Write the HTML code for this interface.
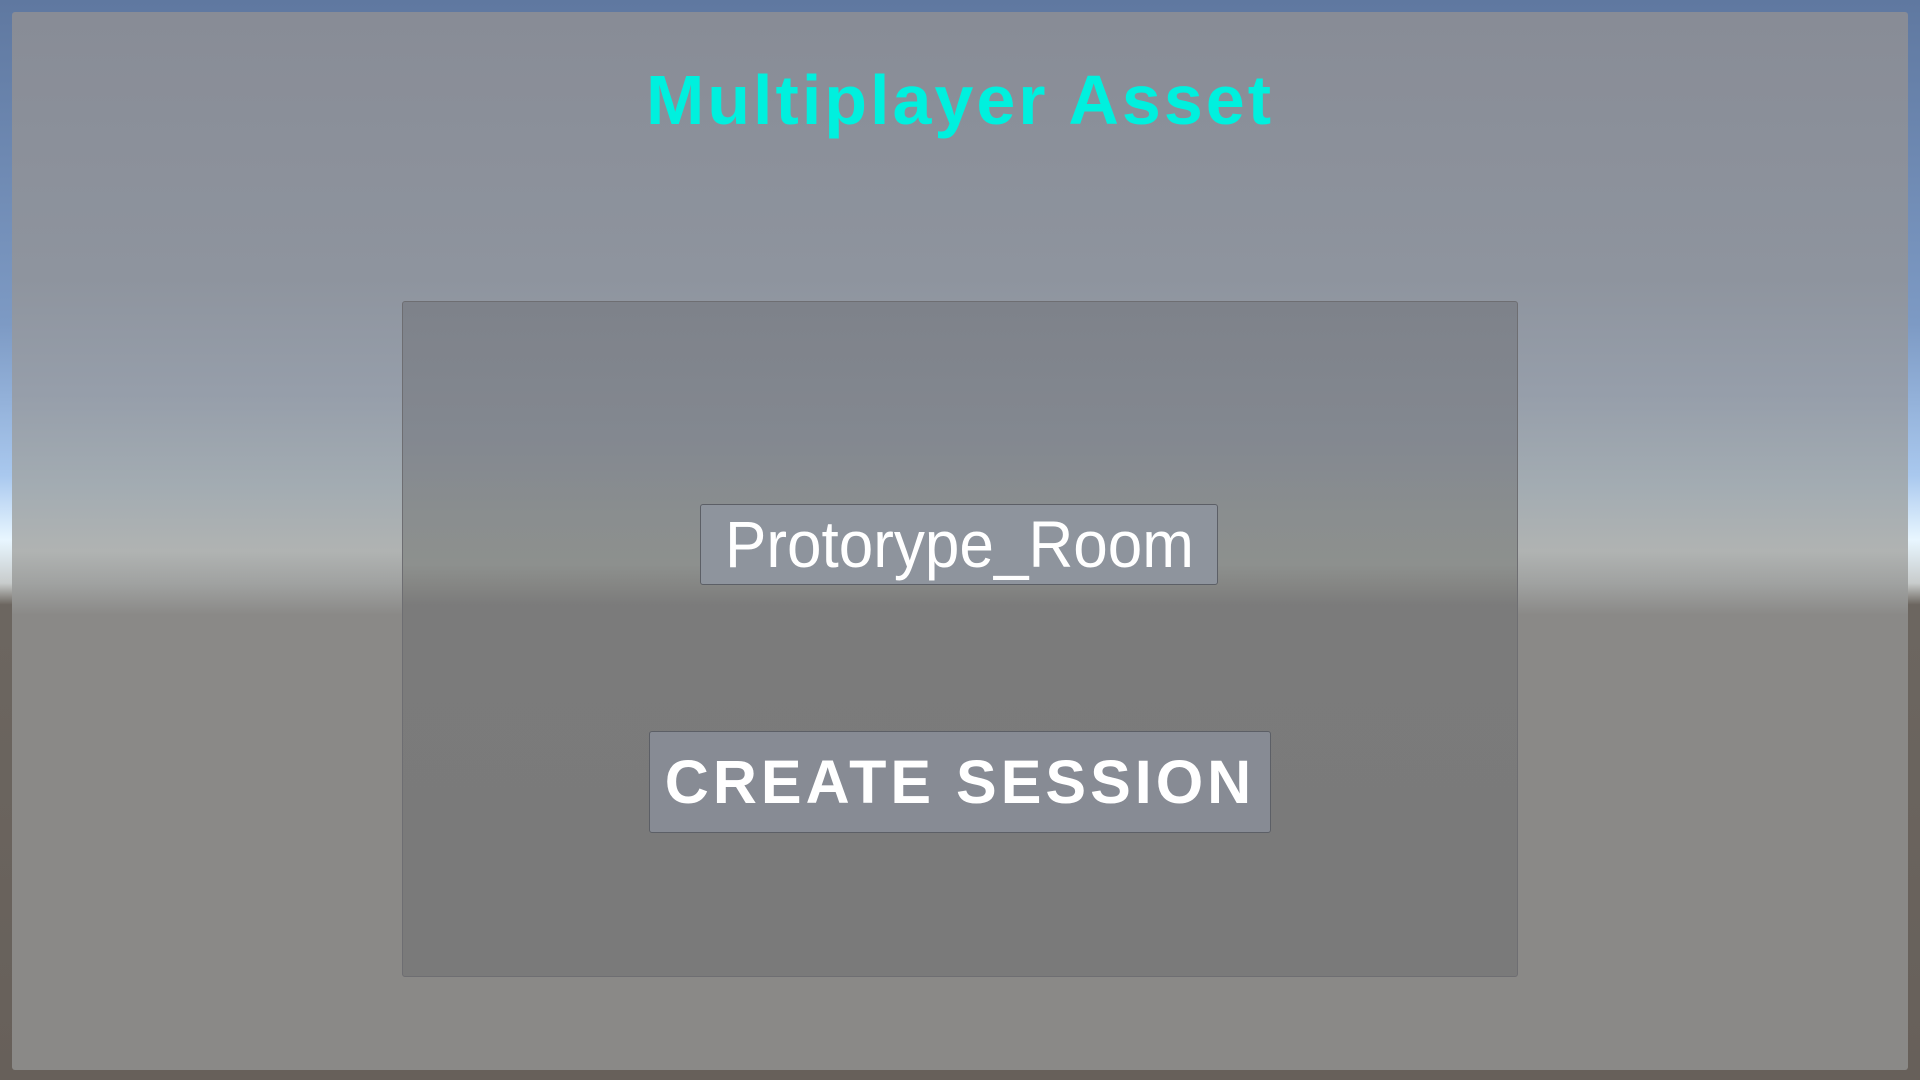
<!DOCTYPE html>
<html><head><meta charset="utf-8"><style>
html,body{margin:0;padding:0;width:1920px;height:1080px;overflow:hidden;font-family:"Liberation Sans",sans-serif}
body{background:linear-gradient(to bottom,#5f78a0 0%,#7d9ac4 30%,#a9c8ee 44%,#e8f6ff 50%,#c8cccc 54%,#6c6660 56%,#67605a 100%);position:relative}
.frame{position:absolute;left:12px;top:12px;right:12px;bottom:10px;border-radius:3px;
background:linear-gradient(to bottom,#888c96 0%,#8e949e 25%,#969eaa 36%,#a3acb2 45%,#b0b3b2 51%,#a0a2a1 54%,#8a8987 57%,#8a8987 100%)}
.panel{position:absolute;left:402px;top:301px;width:1116px;height:676px;border:1px solid #6e6e72;border-radius:3px;box-sizing:border-box;
background:linear-gradient(to bottom,#7e828a 0%,#838890 20%,#8a8e8f 32%,#8d908e 39%,#858684 42%,#7b7b7b 45%,#7a7a7a 100%)}
.title{position:absolute;left:0;width:1920px;top:56px;text-align:center;color:#00f0de;font-weight:bold;font-size:70px;letter-spacing:3px;line-height:88px}
.input{position:absolute;left:700px;top:504px;width:518px;height:81px;box-sizing:border-box;border:1px solid #5c5f66;border-radius:3px;background:#8e949d;text-align:center;color:#fff}
.input span{display:inline-block;font-size:66px;line-height:79px;transform:scaleX(0.94)}
.btn{position:absolute;left:649px;top:731px;width:622px;height:102px;box-sizing:border-box;border:1px solid #5c5f66;border-radius:3px;background:#878b94;text-align:center;color:#fff}
.btn span{display:inline-block;font-size:61px;font-weight:bold;line-height:100px;letter-spacing:4px}
</style></head><body>
<div class="frame"></div>
<div class="title">Multiplayer Asset</div>
<div class="panel"></div>
<div class="input"><span>Protorype_Room</span></div>
<div class="btn"><span>CREATE SESSION</span></div>
</body></html>
